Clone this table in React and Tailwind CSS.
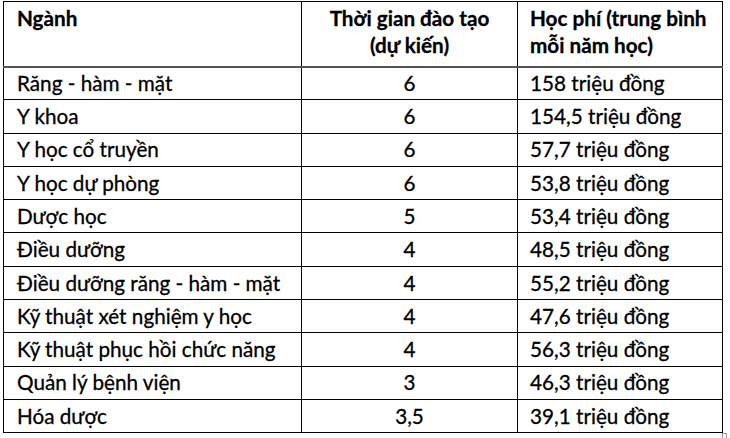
import React from "react";

const rows = [
  ["Răng - hàm - mặt", "6", "158 triệu đồng"],
  ["Y khoa", "6", "154,5 triệu đồng"],
  ["Y học cổ truyền", "6", "57,7 triệu đồng"],
  ["Y học dự phòng", "6", "53,8 triệu đồng"],
  ["Dược học", "5", "53,4 triệu đồng"],
  ["Điều dưỡng", "4", "48,5 triệu đồng"],
  ["Điều dưỡng răng - hàm - mặt", "4", "55,2 triệu đồng"],
  ["Kỹ thuật xét nghiệm y học", "4", "47,6 triệu đồng"],
  ["Kỹ thuật phục hồi chức năng", "4", "56,3 triệu đồng"],
  ["Quản lý bệnh viện", "3", "46,3 triệu đồng"],
  ["Hóa dược", "3,5", "39,1 triệu đồng"],
];

export default function App() {
  return (
    <div className="relative w-[730px] h-[438px] bg-white overflow-hidden text-black font-['Lato','Liberation_Sans',sans-serif] text-[20.7px] [-webkit-text-stroke:0.3px_black]">
      <div className="pl-[3px] pt-[1px]">
        <table className="border-collapse table-fixed w-[719px] border border-black">
          <colgroup>
            <col className="w-[298px]" />
            <col className="w-[216px]" />
            <col className="w-[205px]" />
          </colgroup>
          <thead>
            <tr className="h-[65px] border-b-2 border-b-[#555]">
              <th className="border-r border-black align-top text-left font-bold pl-[13px] pt-[3px] leading-[27px]">
                Ngành
              </th>
              <th className="border-r border-black align-top text-center font-bold pt-[3px] leading-[27px]">
                Thời gian đào tạo
                <br />
                (dự kiến)
              </th>
              <th className="align-top text-left font-bold pl-[12px] pt-[3px] leading-[27px]">
                Học phí (trung bình
                <br />
                mỗi năm học)
              </th>
            </tr>
          </thead>
          <tbody>
            {rows.map(([name, years, fee]) => (
              <tr key={name} className="h-[33.3px] border-t border-black">
                <td className="border-r border-black pl-[13px] leading-none">{name}</td>
                <td className="border-r border-black text-center leading-none">{years}</td>
                <td className="pl-[12px] leading-none">{fee}</td>
              </tr>
            ))}
          </tbody>
        </table>
      </div>
      <div className="absolute left-[722px] top-[433px] w-[5px] h-[6px] border border-[#999]" />
    </div>
  );
}
